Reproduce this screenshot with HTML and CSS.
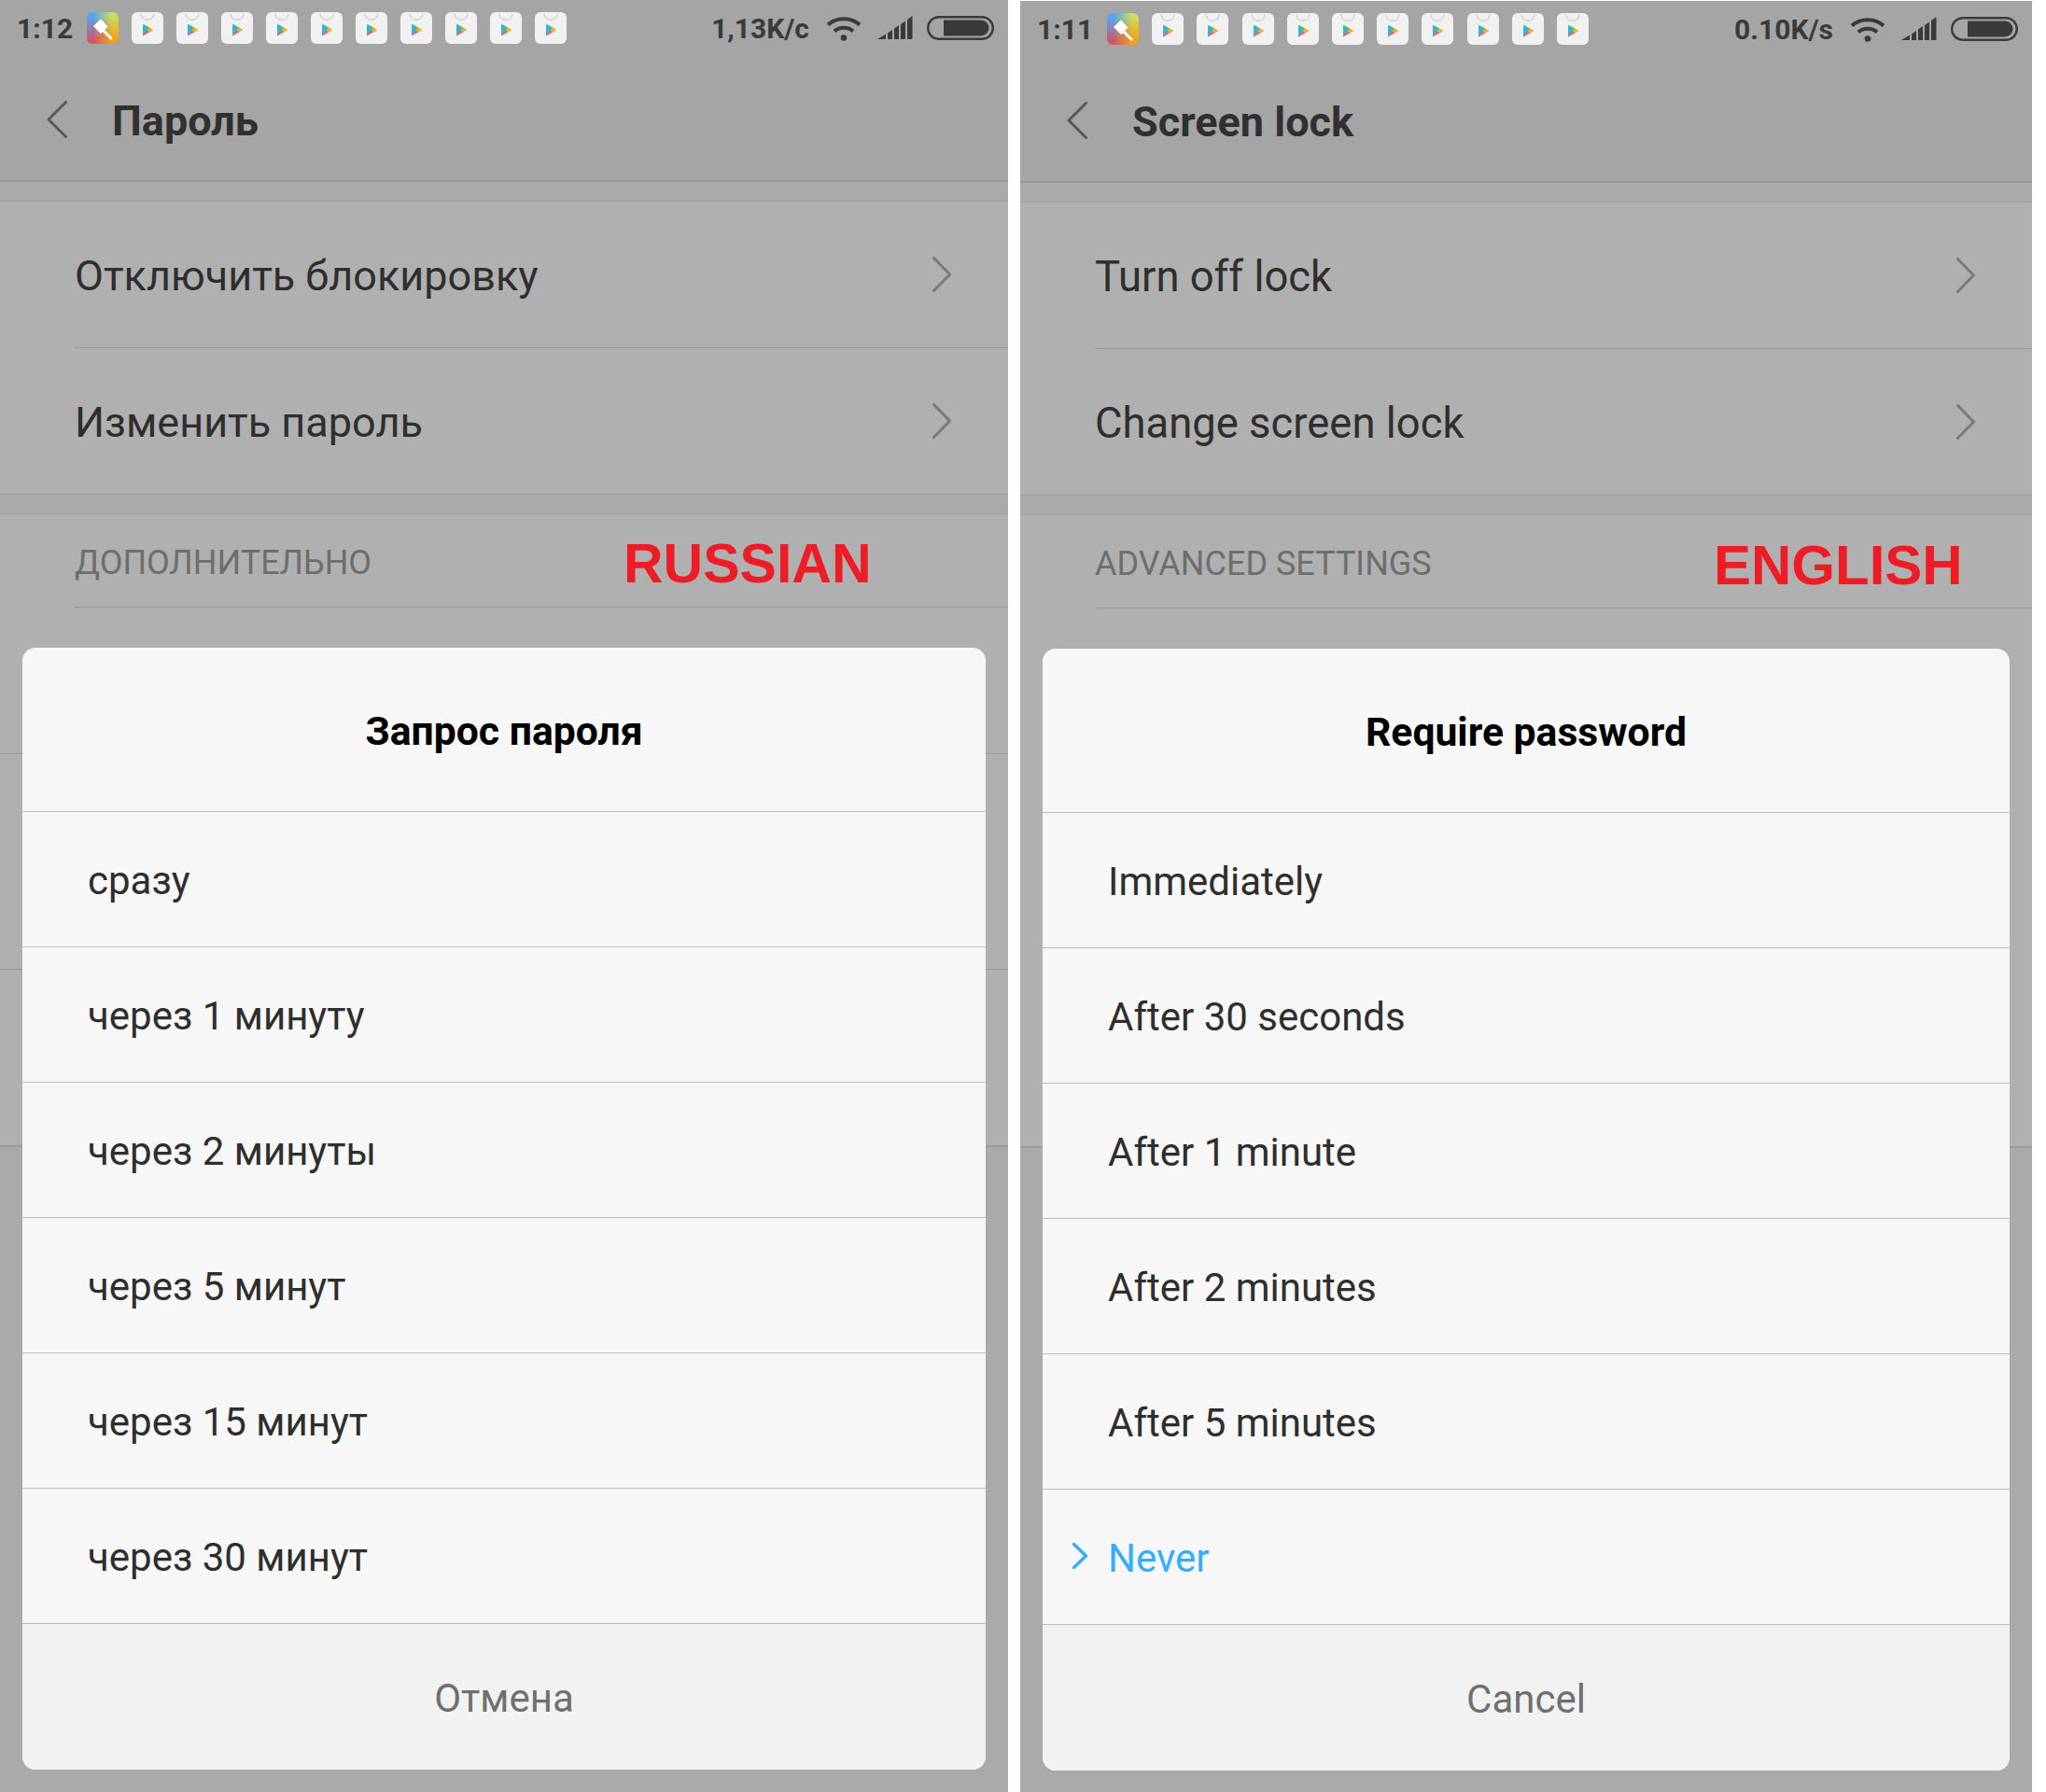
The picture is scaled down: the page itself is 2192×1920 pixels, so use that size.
FILE: index.html
```html
<!DOCTYPE html>
<html lang="en">
<head>
<meta charset="utf-8">
<title>Screen lock comparison</title>
<link rel="stylesheet" href="styles.css">
</head>
<body>
<svg class="defs" width="0" height="0" aria-hidden="true">
  <defs>
    <linearGradient id="gl" x1="0" y1="0" x2="0" y2="1"><stop offset="0.15" stop-color="#55a6f2"/><stop offset="0.85" stop-color="#d0566e"/></linearGradient>
    <linearGradient id="gr" x1="0" y1="0" x2="0" y2="1"><stop offset="0.15" stop-color="#cfdc58"/><stop offset="0.8" stop-color="#efa51a"/></linearGradient>
    <linearGradient id="gm" x1="0" y1="0" x2="1" y2="0"><stop offset="0.2" stop-color="#000"/><stop offset="0.8" stop-color="#fff"/></linearGradient>
    <mask id="mk"><rect width="34" height="34" fill="url(#gm)"/></mask>
    <symbol id="i-brush" viewBox="0 0 34 34">
      <rect width="34" height="34" rx="6" fill="url(#gl)"/>
      <rect width="34" height="34" rx="6" fill="url(#gr)" mask="url(#mk)"/>
      <path d="M7 15 15 7.5 22.5 15.5 15 23Z" fill="#fff"/>
      <path d="M18 20 26 28" stroke="#fff" stroke-width="3" stroke-linecap="round"/>
    </symbol>
    <symbol id="i-play" viewBox="0 0 34 34">
      <rect width="34" height="34" rx="6" fill="#f1f1f1"/>
      <path d="M10 1.5C10.5 10.5 23.500 10.500 24 1.500" fill="none" stroke="#cfcfcf" stroke-width="1.300"/>
      <path d="M12 13 23 19 12 25.500Z" fill="#38aef5"/>
      <path d="M12 12.500 19.500 16.700 16.500 19Z" fill="#14d27e"/>
      <path d="M12 25.500 19.500 21.200 16.500 19Z" fill="#f9605f"/>
      <path d="M18.800 16.300 23 19 18.800 21.500 16.500 19Z" fill="#ffa726"/>
    </symbol>
    <symbol id="i-wifi" viewBox="0 0 38 27">
      <path d="M2 9.500C11 1 27 1 36 9.500M9 16.500C14 11.500 24 11.500 29 16.500" fill="none" stroke="#3a3a3a" stroke-width="4"/>
      <circle cx="19" cy="23.500" r="3.300" fill="#3a3a3a"/>
    </symbol>
    <symbol id="i-signal" viewBox="0 0 38 26">
      <path d="M0 25 9 19.500V25ZM11 18.500 16 15V25H11ZM18 13.500 23 10V25H18ZM25 9 30 5.500V25H25ZM32 4 37.500 0V25H32Z" fill="#3a3a3a"/>
    </symbol>
    <symbol id="i-battery" viewBox="0 0 72 26">
      <rect x="1.200" y="1.200" width="69.600" height="23.600" rx="11.800" fill="none" stroke="#3a3a3a" stroke-width="2.400"/>
      <path d="M18 4.500H58A8.500 8.500 0 0 1 58 21.500H18Z" fill="#3a3a3a"/>
    </symbol>
    <symbol id="i-back" viewBox="0 0 22 40">
      <path d="M20.500 1.500 2 20 20.500 38.500" fill="none" stroke="currentColor" stroke-width="3" stroke-linecap="round" stroke-linejoin="round"/>
    </symbol>
    <symbol id="i-next" viewBox="0 0 20 38">
      <path d="M1.500 1.500 18.500 19 1.500 36.500" fill="none" stroke="currentColor" stroke-width="3" stroke-linecap="round" stroke-linejoin="round"/>
    </symbol>
    <symbol id="i-check" viewBox="0 0 16 28">
      <path d="M1.500 1.500 14.500 14 1.500 26.500" fill="none" stroke="currentColor" stroke-width="3.400" stroke-linecap="round" stroke-linejoin="round"/>
    </symbol>
  </defs>
</svg>

<main class="compare">
  <section class="phone">
    <div class="top">
      <div class="status">
        <span class="time">1:12</span>
        <div class="notifs">
          <svg class="notif"><use href="#i-brush"/></svg>
          <svg class="notif"><use href="#i-play"/></svg><svg class="notif"><use href="#i-play"/></svg><svg class="notif"><use href="#i-play"/></svg><svg class="notif"><use href="#i-play"/></svg><svg class="notif"><use href="#i-play"/></svg>
          <svg class="notif"><use href="#i-play"/></svg><svg class="notif"><use href="#i-play"/></svg><svg class="notif"><use href="#i-play"/></svg><svg class="notif"><use href="#i-play"/></svg><svg class="notif"><use href="#i-play"/></svg>
        </div>
        <div class="sys">
          <span class="speed">1,13K/с</span>
          <svg class="wifi"><use href="#i-wifi"/></svg>
          <svg class="signal"><use href="#i-signal"/></svg>
          <svg class="battery"><use href="#i-battery"/></svg>
        </div>
      </div>
      <header class="bar">
        <svg class="back"><use href="#i-back"/></svg>
        <h1 class="heading">Пароль</h1>
      </header>
    </div>
    <div class="gap"></div>
    <div class="group">
      <div class="row"><span>Отключить блокировку</span><svg class="next"><use href="#i-next"/></svg></div>
      <div class="row row-last"><span>Изменить пароль</span><svg class="next"><use href="#i-next"/></svg></div>
    </div>
    <div class="gap"></div>
    <div class="group group-adv">
      <div class="section">ДОПОЛНИТЕЛЬНО</div>
      <div class="filler filler-a"></div>
      <div class="filler filler-b"></div>
      <div class="filler filler-c"></div>
    </div>
    <div class="tail"></div>
    <strong class="tag">RUSSIAN</strong>
    <div class="dialog">
      <h2 class="dialog-title">Запрос пароля</h2>
      <div class="choice">сразу</div>
      <div class="choice">через 1 минуту</div>
      <div class="choice">через 2 минуты</div>
      <div class="choice">через 5 минут</div>
      <div class="choice">через 15 минут</div>
      <div class="choice">через 30 минут</div>
      <div class="cancel">Отмена</div>
    </div>
  </section>

  <section class="phone phone-en">
    <div class="top">
      <div class="status">
        <span class="time">1:11</span>
        <div class="notifs">
          <svg class="notif"><use href="#i-brush"/></svg>
          <svg class="notif"><use href="#i-play"/></svg><svg class="notif"><use href="#i-play"/></svg><svg class="notif"><use href="#i-play"/></svg><svg class="notif"><use href="#i-play"/></svg><svg class="notif"><use href="#i-play"/></svg>
          <svg class="notif"><use href="#i-play"/></svg><svg class="notif"><use href="#i-play"/></svg><svg class="notif"><use href="#i-play"/></svg><svg class="notif"><use href="#i-play"/></svg><svg class="notif"><use href="#i-play"/></svg>
        </div>
        <div class="sys">
          <span class="speed">0.10K/s</span>
          <svg class="wifi"><use href="#i-wifi"/></svg>
          <svg class="signal"><use href="#i-signal"/></svg>
          <svg class="battery"><use href="#i-battery"/></svg>
        </div>
      </div>
      <header class="bar">
        <svg class="back"><use href="#i-back"/></svg>
        <h1 class="heading">Screen lock</h1>
      </header>
    </div>
    <div class="gap"></div>
    <div class="group">
      <div class="row"><span>Turn off lock</span><svg class="next"><use href="#i-next"/></svg></div>
      <div class="row row-last"><span>Change screen lock</span><svg class="next"><use href="#i-next"/></svg></div>
    </div>
    <div class="gap"></div>
    <div class="group group-adv">
      <div class="section">ADVANCED SETTINGS</div>
      <div class="filler filler-plain"></div>
    </div>
    <div class="tail"></div>
    <strong class="tag">ENGLISH</strong>
    <div class="dialog">
      <h2 class="dialog-title">Require password</h2>
      <div class="choice">Immediately</div>
      <div class="choice">After 30 seconds</div>
      <div class="choice">After 1 minute</div>
      <div class="choice">After 2 minutes</div>
      <div class="choice">After 5 minutes</div>
      <div class="choice choice-on"><svg class="check"><use href="#i-check"/></svg>Never</div>
      <div class="cancel">Cancel</div>
    </div>
  </section>
</main>
</body>
</html>
```

FILE: styles.css
```css
* { box-sizing: border-box; }
html, body { margin: 0; padding: 0; background: #fff; }
body { width: 2192px; height: 1920px; overflow: hidden; font-family: Roboto, "Noto Sans", sans-serif; }
.defs { position: absolute; }
.compare { display: flex; gap: 13px; align-items: flex-start; }

.phone { position: relative; width: 1080px; height: 1920px; background: #aaa; overflow: hidden; display: flex; flex-direction: column; }
.phone-en { width: 1084px; margin-top: 1px; height: 1919px; }

.top { height: 195px; background: #a5a5a5; border-bottom: 2px solid #979797; flex: none; }
.status { height: 60px; display: flex; align-items: center; padding: 0 15px 0 18px; color: #3a3a3a; font-weight: 700; font-size: 30px; }
.time { width: 75px; }
.notifs { display: flex; gap: 14px; }
.phone-en .notifs { gap: 14.2px; }
.notif { width: 34px; height: 34px; display: block; }
.sys { margin-left: auto; display: flex; align-items: center; }
.speed { margin-right: 18px; }
.wifi { width: 38px; height: 27px; margin-right: 17px; }
.signal { width: 38px; height: 26px; margin-right: 15px; }
.battery { width: 72px; height: 26px; }

.bar { height: 133px; display: flex; align-items: center; padding: 2px 0 0 50px; gap: 48px; color: #303030; }
.back { width: 22px; height: 40px; color: #585858; }
.heading { margin: 0; padding-top: 3px; font-size: 45px; font-weight: 700; }

.gap { height: 21px; flex: none; background: #aaa; border-bottom: 1px solid #a0a0a0; }
.group { background: #b0b0b0; flex: none; border-bottom: 1px solid #9c9c9c; }
.row { height: 157px; margin-left: 80px; padding-right: 61px; display: flex; align-items: center; justify-content: space-between; font-size: 45px; color: #2e2e2e; border-bottom: 1px solid #999; }
.row span { padding-top: 3px; }
.phone-en .row { font-size: 45.4px; }
.row-last { height: 156px; border-bottom: 0; }
.next { width: 20px; height: 38px; color: #7a7a7a; }

.section { height: 100px; margin-left: 80px; padding-top: 5px; display: flex; align-items: center; font-size: 36px; color: #6e6e6e; border-bottom: 1px solid #999; }
.filler { border-bottom: 1px solid #999; }
.filler-a { height: 157px; }
.filler-b { height: 231px; }
.filler-c { height: 189px; }
.filler-plain { height: 577px; }
.tail { flex: 1; background: #aaa; }

.tag { position: absolute; top: 569px; left: 668px; font-family: "Liberation Sans", Arial, sans-serif; font-size: 59px; line-height: 70px; color: #ee1c25; font-weight: 700; }
.phone-en .tag { top: 570px; left: 743px; font-size: 60px; }

.dialog { position: absolute; left: 24px; right: 24px; top: 694px; height: 1202px; background: #f7f7f7; border-radius: 14px; overflow: hidden; display: flex; flex-direction: column; }
.dialog-title { margin: 0; height: 176px; padding-top: 3px; flex: none; display: flex; align-items: center; justify-content: center; font-size: 42.7px; font-weight: 700; color: #000; border-bottom: 1px solid #bdbdbd; }
.choice { height: 145px; padding-top: 2px; flex: none; display: flex; align-items: center; padding-left: 70px; font-size: 42px; color: #2e2e2e; border-bottom: 1px solid #bdbdbd; }
.choice-on { padding-left: 32px; color: #33aeff; gap: 22px; }
.check { width: 16px; height: 28px; color: #33aeff; margin-top: -4px; }
.cancel { flex: 1; display: flex; padding-top: 2px; align-items: center; justify-content: center; background: #f2f2f2; font-size: 42px; color: #6f6f6f; }
```
